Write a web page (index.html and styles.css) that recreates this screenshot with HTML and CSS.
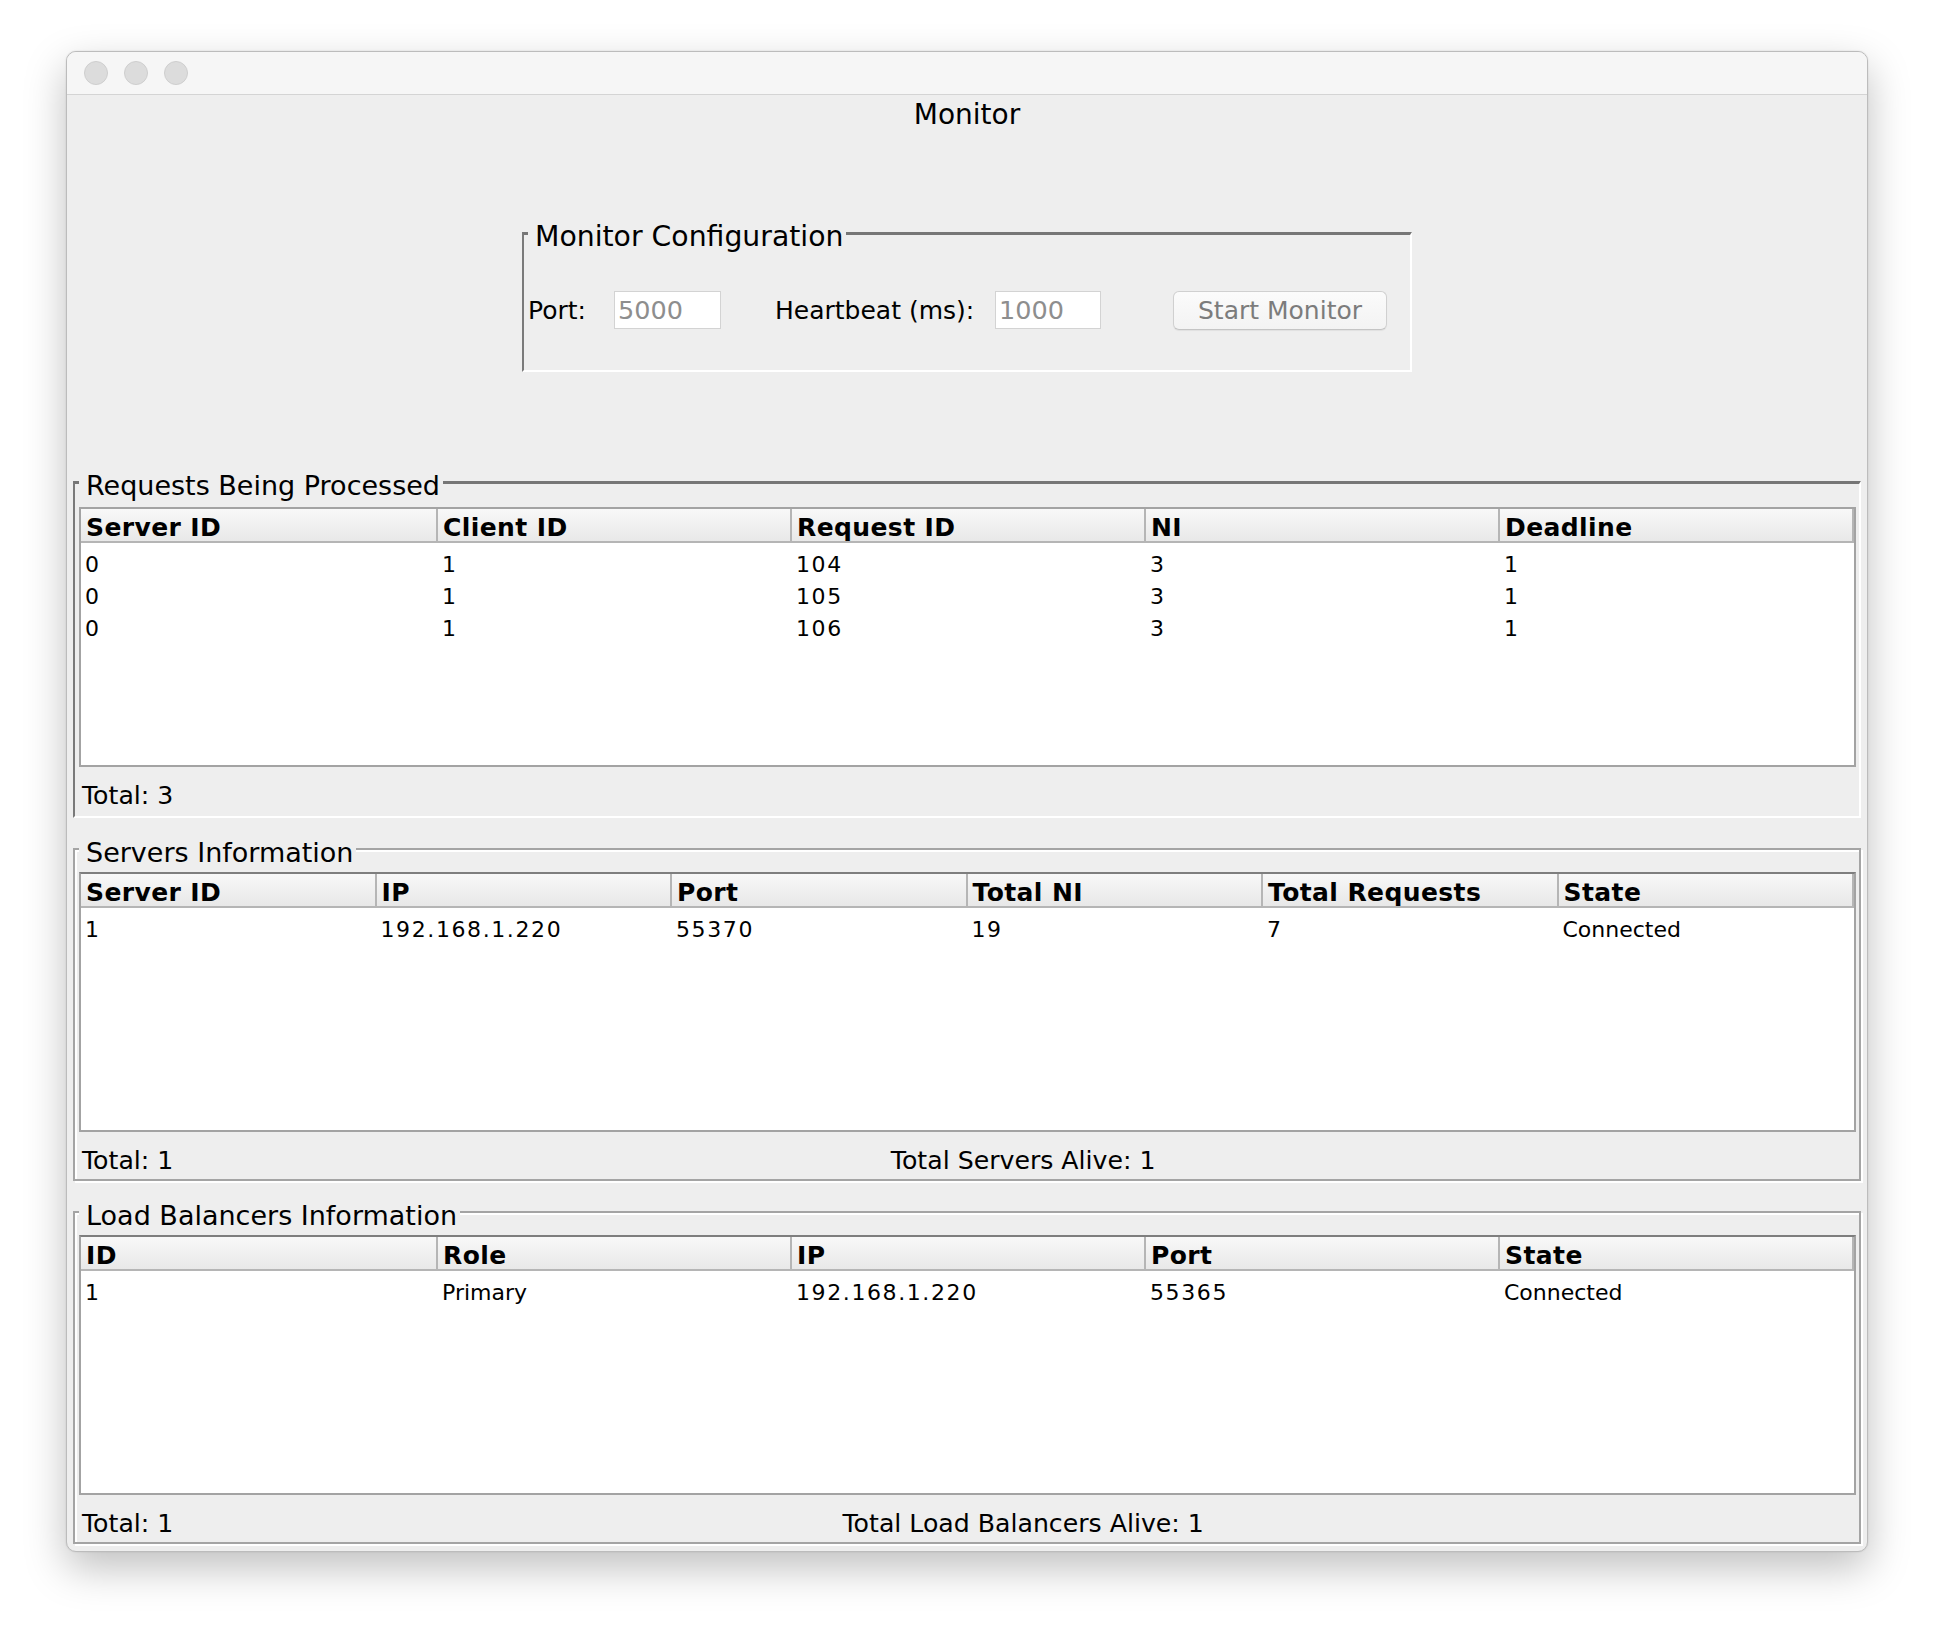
FILE: index.html
```html
<!DOCTYPE html>
<html lang="en">
<head>
<meta charset="utf-8">
<title>Monitor</title>
<link rel="stylesheet" href="styles.css">
</head>
<body>
<div class="window">
  <div class="titlebar">
    <span class="light"></span>
    <span class="light"></span>
    <span class="light"></span>
  </div>
  <div class="content">
    <div class="app-title">Monitor</div>

    <fieldset class="config bevel">
      <legend>Monitor Configuration</legend>
      <div class="config-row">
        <label class="lbl lbl-port">Port:</label>
        <input class="field field-port" type="text" value="5000" readonly>
        <label class="lbl lbl-hb">Heartbeat (ms):</label>
        <input class="field field-hb" type="text" value="1000" readonly>
        <button class="btn" type="button">Start Monitor</button>
      </div>
    </fieldset>

    <fieldset class="panel bevel requests">
      <legend>Requests Being Processed</legend>
      <div class="grid-box">
        <table>
          <colgroup><col class="wide"><col><col><col><col></colgroup>
          <thead>
            <tr><th>Server ID</th><th>Client ID</th><th>Request ID</th><th>NI</th><th>Deadline</th></tr>
          </thead>
          <tbody>
            <tr><td class="n">0</td><td class="n">1</td><td class="n">104</td><td class="n">3</td><td class="n">1</td></tr>
            <tr><td class="n">0</td><td class="n">1</td><td class="n">105</td><td class="n">3</td><td class="n">1</td></tr>
            <tr><td class="n">0</td><td class="n">1</td><td class="n">106</td><td class="n">3</td><td class="n">1</td></tr>
          </tbody>
        </table>
      </div>
      <div class="footer">
        <span>Total: 3</span>
      </div>
    </fieldset>

    <fieldset class="panel etched servers">
      <legend>Servers Information</legend>
      <div class="grid-box">
        <table>
          <thead>
            <tr><th>Server ID</th><th>IP</th><th>Port</th><th>Total NI</th><th>Total Requests</th><th>State</th></tr>
          </thead>
          <tbody>
            <tr><td class="n">1</td><td class="n">192.168.1.220</td><td class="n">55370</td><td class="n">19</td><td class="n">7</td><td>Connected</td></tr>
          </tbody>
        </table>
      </div>
      <div class="footer">
        <span>Total: 1</span>
        <span class="alive">Total Servers Alive: 1</span>
      </div>
    </fieldset>

    <fieldset class="panel etched balancers">
      <legend>Load Balancers Information</legend>
      <div class="grid-box">
        <table>
          <colgroup><col class="wide"><col><col><col><col></colgroup>
          <thead>
            <tr><th>ID</th><th>Role</th><th>IP</th><th>Port</th><th>State</th></tr>
          </thead>
          <tbody>
            <tr><td class="n">1</td><td>Primary</td><td class="n">192.168.1.220</td><td class="n">55365</td><td>Connected</td></tr>
          </tbody>
        </table>
      </div>
      <div class="footer">
        <span>Total: 1</span>
        <span class="alive">Total Load Balancers Alive: 1</span>
      </div>
    </fieldset>
  </div>
</div>
</body>
</html>
```

FILE: styles.css
```css
* {
  box-sizing: border-box;
}

html,
body {
  margin: 0;
  padding: 0;
  background: #ffffff;
}

body {
  width: 1936px;
  height: 1636px;
  overflow: hidden;
  font-family: "DejaVu Sans", sans-serif;
  color: #000000;
  padding-top: 51px;
}

.window {
  margin-left: 66px;
  width: 1802px;
  height: 1501px;
  border: 1px solid #bcbcbc;
  border-radius: 10px;
  background: #eeeeee;
  box-shadow: 0 16px 42px rgba(0, 0, 0, 0.25), 0 0 2px rgba(0, 0, 0, 0.12);
  overflow: hidden;
}

.titlebar {
  height: 43px;
  background: #f6f6f6;
  border-bottom: 1px solid #d4d4d4;
  display: flex;
  align-items: center;
  gap: 16px;
  padding-left: 17px;
}

.light {
  width: 24px;
  height: 24px;
  border-radius: 50%;
  background: #dcdcdc;
  border: 1px solid #cecece;
}

.content {
  display: flex;
  flex-direction: column;
  padding: 5px 6px 6px;
}

.app-title {
  font-size: 28px;
  line-height: 30px;
  text-align: center;
}

/* titled borders */
fieldset {
  margin: 0;
  min-width: 0;
}

legend {
  font-size: 27px;
  line-height: 32px;
  padding: 8px 3px 0 7px;
  background: #eeeeee;
  white-space: nowrap;
}

.bevel {
  border-style: solid;
  border-width: 3px 2px 2px 2px;
  border-color: #767676 #ffffff #ffffff #7a7a7a;
}

.etched {
  border: 2px solid #a4a4a4;
  box-shadow: inset 2px 2px 0 #ffffff, 2px 2px 0 #ffffff;
}

/* configuration box */
.config {
  align-self: center;
  width: 890px;
  margin-top: 83px;
  padding: 38px 0 41px 0;
}

.config legend {
  margin-left: 4px;
  font-size: 28.3px;
}

.config-row {
  display: flex;
  align-items: center;
  height: 38px;
}

.lbl {
  font-size: 25px;
  white-space: nowrap;
}

.lbl-port {
  width: 86px;
  margin-left: 4px;
}

.lbl-hb {
  width: 220px;
  margin-left: 54px;
}

.field {
  width: 107px;
  height: 38px;
  border: 1px solid #d3d3d3;
  background: #ffffff;
  font-family: "DejaVu Sans", sans-serif;
  font-size: 25.5px;
  color: #8e8e8e;
  padding: 0 3px;
  outline: none;
  margin: 0;
}

.field-hb {
  width: 106px;
}

.btn {
  margin: 0 0 0 72px;
  width: 214px;
  height: 39px;
  border: 1px solid #d0d0d0;
  border-bottom-color: #c4c4c4;
  border-radius: 6px;
  background: linear-gradient(#fbfbfb, #f3f3f3);
  box-shadow: 0 1px 1px rgba(0, 0, 0, 0.06);
  font-family: "DejaVu Sans", sans-serif;
  font-size: 25px;
  color: #7c7c7c;
  padding: 0;
}

/* panels */
.panel {
  padding: 0 3px 0 4px;
}

.requests {
  margin-top: 90px;
  padding-bottom: 5px;
}

.servers {
  margin-top: 11px;
  padding-bottom: 3px;
}

.balancers {
  margin-top: 11px;
  padding-bottom: 3px;
}

.grid-box {
  margin-top: 5px;
  height: 260px;
  background: #ffffff;
  border: 2px solid #a3a3a3;
  overflow: hidden;
}

.etched .grid-box {
  margin-top: 3px;
  border-top-color: #7e7e7e;
}

table {
  width: 100%;
  border-collapse: separate;
  border-spacing: 0;
  table-layout: fixed;
}

col.wide {
  width: 357px;
}

th {
  text-align: left;
  font-weight: bold;
  font-size: 25px;
  letter-spacing: 0.4px;
  line-height: 27px;
  padding: 5px 4px 0 5px;
  background: linear-gradient(#f8f8f8, #e8e8e8);
  border-right: 2px solid #b5b5b5;
  border-bottom: 2px solid #b5b5b5;
  white-space: nowrap;
  overflow: hidden;
}

td {
  font-size: 22px;
  line-height: 20px;
  padding: 12px 4px 0;
  white-space: nowrap;
}

td.n {
  letter-spacing: 1.6px;
}

.footer {
  display: grid;
  grid-template-columns: auto 1fr;
  column-gap: 17px;
  margin-top: 14px;
  padding-left: 3px;
  font-size: 25.2px;
  line-height: 30px;
  white-space: nowrap;
}

.footer .alive {
  text-align: center;
}
```
